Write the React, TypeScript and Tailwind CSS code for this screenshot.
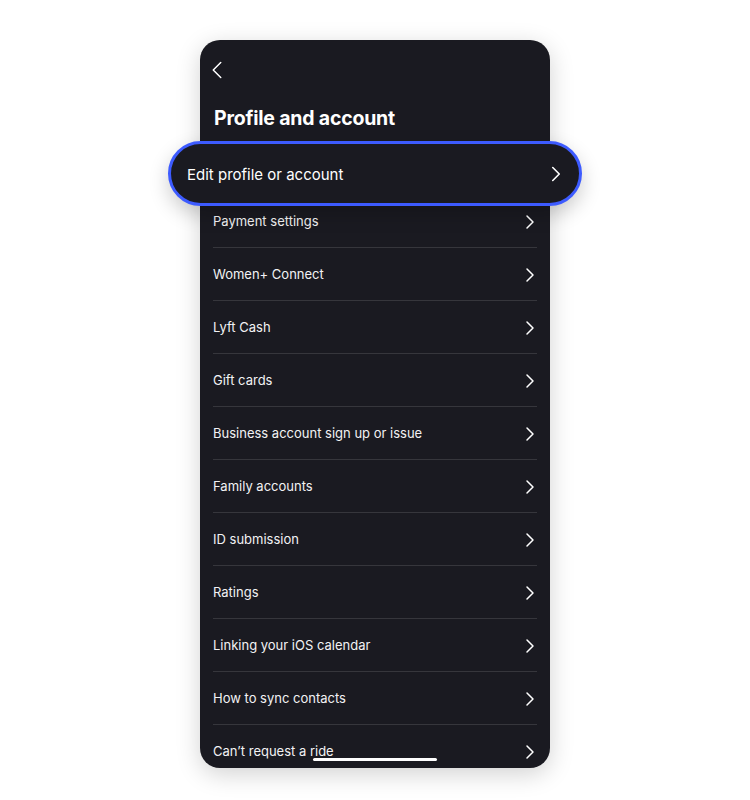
import { ChevronLeft, ChevronRight } from "lucide-react";

const ROWS = [
  "Payment settings",
  "Women+ Connect",
  "Lyft Cash",
  "Gift cards",
  "Business account sign up or issue",
  "Family accounts",
  "ID submission",
  "Ratings",
  "Linking your iOS calendar",
  "How to sync contacts",
  "Can’t request a ride",
];

export default function App() {
  return (
    <div
      className="w-[750px] h-[800px] bg-white flex justify-center pt-[40px]"
      style={{ fontFamily: "Inter, 'Noto Sans', sans-serif" }}
    >
      <div className="relative w-[350px] h-[728px]">
        {/* Phone screen */}
        <div className="w-full h-full rounded-[20px] bg-[#1a1a21] overflow-hidden shadow-[0_6px_24px_rgba(0,0,0,0.18)]">
          <div className="h-[102px] pt-[15px] pl-[2px]">
            <ChevronLeft size={30} strokeWidth={1.2} className="text-white" />
            <h1 className="mt-[19px] ml-[12px] text-white text-[19.5px] font-bold tracking-[-0.2px]">
              Profile and account
            </h1>
          </div>
          <ul className="px-[13px]">
            {/* first row sits under the highlighted pill */}
            <li className="h-[53px]" />
            {ROWS.map((label) => (
              <li
                key={label}
                className="h-[53px] flex items-center justify-between border-b border-[#36363c] pt-[2px]"
              >
                <span className="text-[13px] text-[#f2f2f4]">{label}</span>
                <ChevronRight size={24} strokeWidth={1.5} className="text-white mr-[-5px]" />
              </li>
            ))}
          </ul>
        </div>

        {/* Highlighted row */}
        <div className="absolute left-[-32px] top-[101px] w-[414px] h-[65px] rounded-full border-[3px] border-[#3d5bff] bg-[#1a1a21] shadow-[0_8px_20px_rgba(0,0,0,0.2)] flex items-center justify-between pl-[16px] pr-[10px]">
          <span className="text-[15px] text-white pt-[3px]">Edit profile or account</span>
          <ChevronRight size={26} strokeWidth={1.5} className="text-white" />
        </div>

        {/* Home indicator */}
        <div className="absolute left-[113px] bottom-[7px] w-[124px] h-[3px] rounded-full bg-white" />
      </div>
    </div>
  );
}
